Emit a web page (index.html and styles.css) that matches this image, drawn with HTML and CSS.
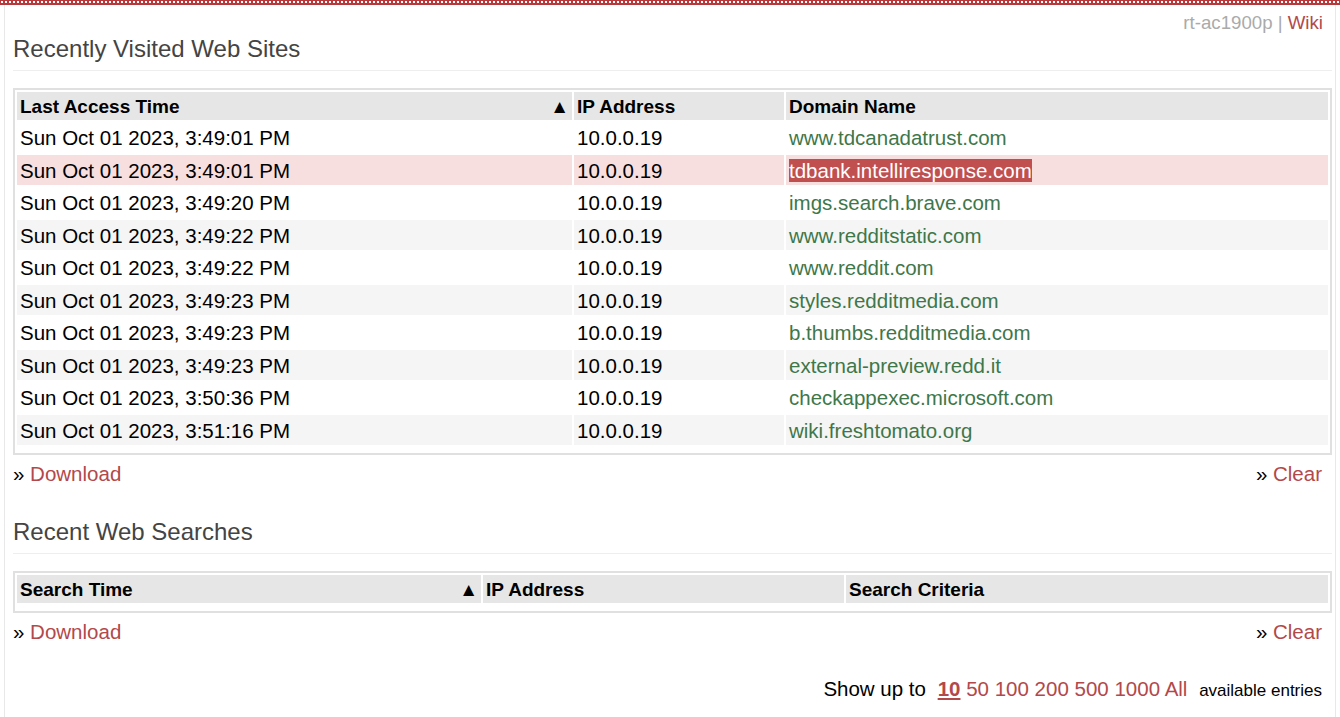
FILE: index.html
```html
<!DOCTYPE html>
<html lang="en">
<head>
    <meta charset="UTF-8">
    <title>Web Usage</title>
    <link rel="stylesheet" href="styles.css">
</head>
<body>
    <div class="top-band"></div>
    <div class="page">
        <div class="top-links">
            <span class="router">rt-ac1900p</span> <span class="sep">|</span> <a href="#" class="link">Wiki</a>
        </div>

        <h2 class="section-title">Recently Visited Web Sites</h2>
        <table class="grid sites">
            <thead>
                <tr>
                    <th class="col-time">Last Access Time <span class="sort">&#9650;</span></th>
                    <th class="col-ip">IP Address</th>
                    <th>Domain Name</th>
                </tr>
            </thead>
            <tbody>
                <tr><td>Sun Oct 01 2023, 3:49:01 PM</td><td>10.0.0.19</td><td class="domain">www.tdcanadatrust.com</td></tr>
                <tr class="hover"><td>Sun Oct 01 2023, 3:49:01 PM</td><td>10.0.0.19</td><td class="domain"><span class="selected">tdbank.intelliresponse.com</span></td></tr>
                <tr><td>Sun Oct 01 2023, 3:49:20 PM</td><td>10.0.0.19</td><td class="domain">imgs.search.brave.com</td></tr>
                <tr class="alt"><td>Sun Oct 01 2023, 3:49:22 PM</td><td>10.0.0.19</td><td class="domain">www.redditstatic.com</td></tr>
                <tr><td>Sun Oct 01 2023, 3:49:22 PM</td><td>10.0.0.19</td><td class="domain">www.reddit.com</td></tr>
                <tr class="alt"><td>Sun Oct 01 2023, 3:49:23 PM</td><td>10.0.0.19</td><td class="domain">styles.redditmedia.com</td></tr>
                <tr><td>Sun Oct 01 2023, 3:49:23 PM</td><td>10.0.0.19</td><td class="domain">b.thumbs.redditmedia.com</td></tr>
                <tr class="alt"><td>Sun Oct 01 2023, 3:49:23 PM</td><td>10.0.0.19</td><td class="domain">external-preview.redd.it</td></tr>
                <tr><td>Sun Oct 01 2023, 3:50:36 PM</td><td>10.0.0.19</td><td class="domain">checkappexec.microsoft.com</td></tr>
                <tr class="alt"><td>Sun Oct 01 2023, 3:51:16 PM</td><td>10.0.0.19</td><td class="domain">wiki.freshtomato.org</td></tr>
            </tbody>
            <tfoot>
                <tr><td colspan="3" class="foot"></td></tr>
            </tfoot>
        </table>
        <div class="actions">
            <span>&raquo; <a href="#" class="link">Download</a></span>
            <span>&raquo; <a href="#" class="link">Clear</a></span>
        </div>

        <h2 class="section-title second">Recent Web Searches</h2>
        <table class="grid searches">
            <thead>
                <tr>
                    <th class="col-stime">Search Time <span class="sort">&#9650;</span></th>
                    <th class="col-sip">IP Address</th>
                    <th>Search Criteria</th>
                </tr>
            </thead>
            <tfoot>
                <tr><td colspan="3" class="foot"></td></tr>
            </tfoot>
        </table>
        <div class="actions">
            <span>&raquo; <a href="#" class="link">Download</a></span>
            <span>&raquo; <a href="#" class="link">Clear</a></span>
        </div>

        <div class="show-up">
            Show up to
            <a href="#" class="link current">10</a>
            <a href="#" class="link">50</a>
            <a href="#" class="link">100</a>
            <a href="#" class="link">200</a>
            <a href="#" class="link">500</a>
            <a href="#" class="link">1000</a>
            <a href="#" class="link">All</a>
            <span class="avail">available entries</span>
        </div>
    </div>
</body>
</html>
```

FILE: styles.css
```css
* {
    box-sizing: border-box;
}
body {
    margin: 0;
    font-family: "Liberation Sans", Arial, sans-serif;
    color: #000;
    background-color: #fff;
}
.top-band {
    height: 5px;
    background:
        radial-gradient(circle at 2px 2px, #fff 0.9px, transparent 1.3px) 0 0 / 4px 4px,
        #b8393c;
}
.page {
    margin: 0 4px;
    min-height: 712px;
    border-left: 1px solid #e8e8e8;
    border-right: 1px solid #e8e8e8;
    padding: 0 3px 0 8px;
}
.top-links {
    text-align: right;
    font-size: 18.67px;
    line-height: 22px;
    padding: 7px 9px 0 0;
    height: 30px;
}
.router, .sep {
    color: #aaa;
}
.link {
    color: #b3484b;
    text-decoration: none;
}
.section-title {
    margin: 0;
    font-size: 24px;
    font-weight: normal;
    line-height: 28px;
    color: #444;
    padding-bottom: 7px;
    border-bottom: 1px solid #eee;
}
.section-title.second {
    margin-top: 33.5px;
}
.grid {
    width: 100%;
    margin-top: 17px;
    border: 2px solid #e0e0e0;
    border-spacing: 2px;
    font-size: 20.5px;
}
.grid th {
    background-color: #e6e6e6;
    text-align: left;
    font-size: 19px;
    line-height: 23px;
    padding: 3px 3px 2px;
    position: relative;
}
.grid td {
    line-height: 22.5px;
    padding: 5px 3px 3px;
    white-space: nowrap;
}
.grid td.foot {
    padding: 0;
    height: 4px;
    line-height: 0;
}
.sort {
    position: absolute;
    right: 3px;
    top: 3px;
    font-size: 19px;
}
.sites .col-time { width: 555px; }
.sites .col-ip { width: 210px; }
.searches .col-stime { width: 464px; }
.searches .col-sip { width: 361px; }
.grid tr.alt td {
    background-color: #f5f5f5;
}
.grid tr.hover td {
    background-color: #f8dfdf;
}
.domain {
    color: #3e7749;
}
.selected {
    background-color: #c0504f;
    color: #fff;
}
.actions {
    display: flex;
    justify-content: space-between;
    font-size: 20.5px;
    line-height: 23px;
    margin-top: 6.5px;
    padding-right: 10px;
}
.show-up {
    text-align: right;
    font-size: 20.5px;
    line-height: 23px;
    margin-top: 34px;
    padding-right: 10px;
}
.show-up .current {
    font-weight: bold;
    text-decoration: underline;
    margin-left: 6px;
}
.avail {
    font-size: 17px;
    margin-left: 6px;
}
```
